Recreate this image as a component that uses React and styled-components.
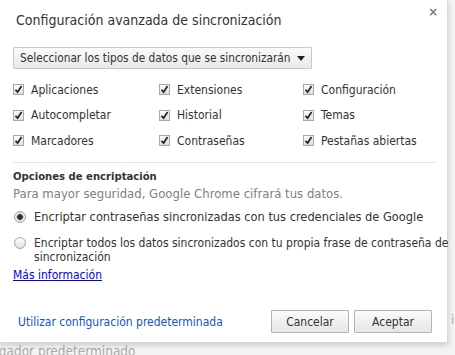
import React from "react";
import styled, { createGlobalStyle } from "styled-components";

const GlobalStyle = createGlobalStyle`
  html, body {
    margin: 0;
    padding: 0;
    background: #f4f4f4;
  }
  body {
    font-family: "DejaVu Sans Condensed", "DejaVu Sans", sans-serif;
  }
`;

const Page = styled.div`
  position: relative;
  width: 455px;
  height: 355px;
  overflow: hidden;
  background: #f4f4f4;
`;

const BackText = styled.div`
  padding: 312px 0 0 451px;
  font-size: 13px;
  color: #aaa;
  white-space: nowrap;
`;

const BackLine = styled.div`
  padding: 16px 0 0 0;
  margin-left: -31px;
  font-size: 13.5px;
  color: #aaa;
  white-space: nowrap;
`;

const Dialog = styled.div`
  position: absolute;
  left: 0;
  top: 0;
  width: 448px;
  height: 343px;
  box-sizing: border-box;
  background: #fff;
  border-right: 1px solid #d8d8d8;
  border-bottom: 1px solid #d8d8d8;
  box-shadow: 0 2px 6px rgba(0, 0, 0, 0.18);
  display: flex;
  flex-direction: column;
  padding: 0 4px 0 13px;
  color: #333;
  font-size: 12px;
`;

const Header = styled.div`
  display: flex;
  justify-content: space-between;
  align-items: flex-start;
  height: 47px;
`;

const Title = styled.h1`
  margin: 12px 0 0 3px;
  font-size: 14px;
  font-weight: normal;
  color: #333;
`;

const Close = styled.span`
  margin: 4px 5px 0 0;
  font-size: 13px;
  font-weight: bold;
  color: #777;
`;

const SelectButton = styled.button`
  align-self: flex-start;
  display: flex;
  align-items: center;
  gap: 6px;
  height: 22px;
  padding: 0 6px;
  border: 1px solid #c8c8c8;
  border-radius: 1px;
  background: linear-gradient(#fafafa, #e9e9e9);
  font: inherit;
  font-size: 11.75px;
  color: #333;
  white-space: nowrap;
`;

const Caret = styled.span`
  width: 0;
  height: 0;
  border-left: 4px solid transparent;
  border-right: 4px solid transparent;
  border-top: 5px solid #222;
`;

const CheckGrid = styled.div`
  display: grid;
  grid-template-columns: 146px 144px 1fr;
  grid-auto-rows: 25.5px;
  margin: 8px 7px 0 0;
  padding-bottom: 8px;
  border-bottom: 1px solid #e4e4e4;
`;

const CheckItem = styled.label`
  display: flex;
  align-items: center;
  gap: 7px;
`;

const Box = styled.span`
  width: 11px;
  height: 11px;
  flex: none;
  box-sizing: border-box;
  border: 1px solid #a8a8a8;
  background: linear-gradient(#fdfdfd, #dedede);
  display: flex;
  align-items: center;
  justify-content: center;
`;

const Check = () => (
  <Box>
    <svg width="9" height="9" viewBox="0 0 9 9">
      <path d="M1.5 4.8 L3.6 7 L7.6 1" fill="none" stroke="#2a2a2a" strokeWidth="1.8" />
    </svg>
  </Box>
);

const SectionTitle = styled.div`
  margin-top: 6px;
  font-size: 11.2px;
  font-weight: bold;
  line-height: 16px;
`;

const Hint = styled.div`
  margin-top: 1px;
  font-size: 13px;
  color: #808080;
  line-height: 16px;
`;

const RadioRow = styled.label`
  display: flex;
  align-items: flex-start;
  gap: 8px;
  margin-top: ${(p) => p.gap}px;
  margin-right: -3px;
  font-size: ${(p) => p.size}px;
  line-height: 14px;
  white-space: nowrap;
`;

const Radio = styled.span`
  width: 12px;
  height: 12px;
  margin: 1px 0 0 1px;
  flex: none;
  box-sizing: border-box;
  border-radius: 50%;
  border: 1px solid #a8a8a8;
  background: ${(p) =>
    p.on
      ? "radial-gradient(circle, #333 0 2.5px, #bbb 3px, #e8e8e8 4px, #f4f4f4)"
      : "linear-gradient(#fdfdfd, #e0e0e0)"};
`;

const Link = styled.a`
  color: ${(p) => (p.plain ? "#1155cc" : "#0000ee")};
  text-decoration: ${(p) => (p.plain ? "none" : "underline")};
`;

const MoreLink = styled.div`
  margin-top: 3px;
  line-height: 16px;
`;

const Footer = styled.div`
  margin-top: auto;
  margin-bottom: 9px;
  margin-right: 11px;
  display: flex;
  align-items: center;
  gap: 5px;
  padding-left: 5px;
`;

const Spacer = styled.div`
  flex: 1;
`;

const Button = styled.button`
  width: 78px;
  height: 23px;
  border: 1px solid #b4b4b4;
  border-radius: 1px;
  background: linear-gradient(#fbfbfb, #e6e6e6);
  font: inherit;
  color: #333;
`;

const items = [
  "Aplicaciones",
  "Extensiones",
  "Configuración",
  "Autocompletar",
  "Historial",
  "Temas",
  "Marcadores",
  "Contraseñas",
  "Pestañas abiertas",
];

export default function App() {
  return (
    <Page>
      <GlobalStyle />
      <BackText>io</BackText>
      <BackLine>navegador predeterminado</BackLine>
      <Dialog>
        <Header>
          <Title>Configuración avanzada de sincronización</Title>
          <Close>×</Close>
        </Header>
        <SelectButton>
          Seleccionar los tipos de datos que se sincronizarán
          <Caret />
        </SelectButton>
        <CheckGrid>
          {items.map((t) => (
            <CheckItem key={t}>
              <Check />
              {t}
            </CheckItem>
          ))}
        </CheckGrid>
        <SectionTitle>Opciones de encriptación</SectionTitle>
        <Hint>Para mayor seguridad, Google Chrome cifrará tus datos.</Hint>
        <RadioRow gap={8} size={12.7}>
          <Radio on />
          Encriptar contraseñas sincronizadas con tus credenciales de Google
        </RadioRow>
        <RadioRow gap={12} size={12}>
          <Radio />
          <span>
            Encriptar todos los datos sincronizados con tu propia frase de contraseña de
            <br />
            sincronización
          </span>
        </RadioRow>
        <MoreLink>
          <Link href="#">Más información</Link>
        </MoreLink>
        <Footer>
          <Link plain href="#">Utilizar configuración predeterminada</Link>
          <Spacer />
          <Button>Cancelar</Button>
          <Button>Aceptar</Button>
        </Footer>
      </Dialog>
    </Page>
  );
}
